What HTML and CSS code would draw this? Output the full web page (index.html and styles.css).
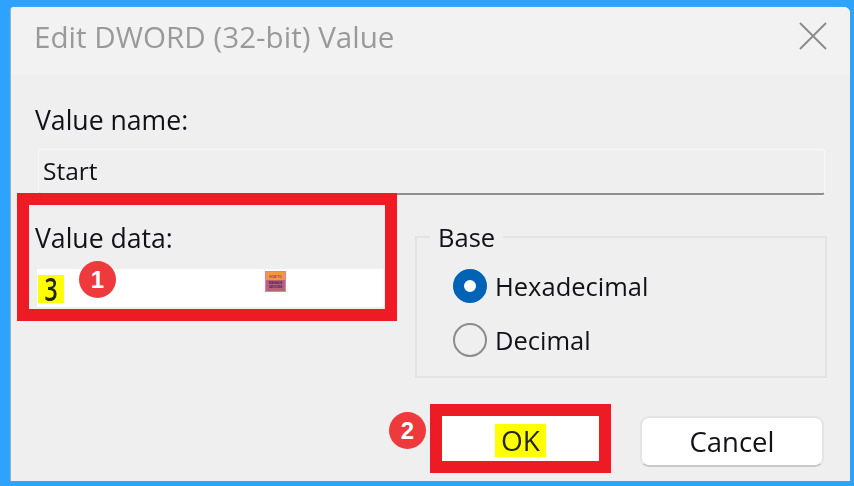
FILE: index.html
```html
<!DOCTYPE html>
<html lang="en">
<head>
<meta charset="utf-8">
<title>Edit DWORD (32-bit) Value</title>
<link rel="stylesheet" href="styles.css">
</head>
<body>
<div class="window">
  <header class="titlebar">
    <span class="title">Edit DWORD (32-bit) Value</span>
    <svg class="close" viewBox="0 0 28 28" aria-label="Close"><path d="M1 1L27 27M27 1L1 27"/></svg>
  </header>
  <main class="content">
    <div class="label name-label">Value name:</div>
    <div class="name-field">Start</div>
    <div class="middle">
      <div class="data-col">
        <div class="label">Value data:</div>
        <div class="data-field">
          <span class="hl hl-three"><span class="three-glyph">3</span></span>
          <div class="logo"><span class="logo-top">HOW TO</span><span class="logo-bottom">MANAGE DEVICES</span></div>
        </div>
        <div class="redbox"></div>
        <span class="badge badge-one">1</span>
      </div>
      <fieldset class="base">
        <legend>Base</legend>
        <div class="radio-row"><span class="radio on"></span><span>Hexadecimal</span></div>
        <div class="radio-row"><span class="radio"></span><span>Decimal</span></div>
      </fieldset>
    </div>
    <div class="actions">
      <span class="badge badge-two">2</span>
      <div class="btn ok"><span class="hl hl-ok">OK</span></div>
      <div class="btn cancel">Cancel</div>
    </div>
  </main>
</div>
</body>
</html>
```
FILE: styles.css
```css
* { box-sizing: border-box; }
html, body { margin: 0; height: 100%; }
body {
  width: 854px;
  height: 486px;
  overflow: hidden;
  background: #2ea3fe;
  padding: 7px 4px 5px 11px;
  font-family: "Open Sans", "Noto Sans", sans-serif;
  color: #111118;
}
.window {
  height: 474px;
  background: #efefef;
  border-radius: 3px 6px 0 0;
  box-shadow: -1px 0 1px #9fb4c4;
  display: flex;
  flex-direction: column;
}
.titlebar {
  height: 68px;
  flex: none;
  background: #f2f2f2;
  border-radius: 3px 6px 0 0;
  padding: 15px 23px 0 23px;
  display: flex;
  justify-content: space-between;
  align-items: flex-start;
}
.title {
  font-size: 29.6px;
  line-height: 30px;
  color: #9a9a9a;
  filter: blur(0.4px);
}
.close { width: 28px; height: 28px; }
.close path { stroke: #8a8a8a; stroke-width: 1.8; fill: none; }
.content {
  flex: 1;
  position: relative;
  padding: 29px 22px 0 24px;
}
.label {
  font-size: 26.6px;
  line-height: 32px;
  filter: blur(0.3px);
}
.name-field {
  margin: 13px 3px 0 3px;
  height: 46px;
  padding: 3px 0 0 4px;
  font-size: 24.5px;
  line-height: 36px;
  background: #efefef;
  border: 1px solid #f8f8f8;
  border-bottom: 2px solid #8e8e8e;
  border-radius: 3px;
  filter: blur(0.3px);
}
.middle {
  display: flex;
  margin-top: 12px;
  height: 171px;
}
.data-col {
  position: relative;
  flex: none;
  width: 379px;
  padding-top: 15px;
}
.data-field {
  position: relative;
  margin: 15px 0 0 2px;
  width: 347px;
  height: 38px;
  background: #fff;
  padding: 6px 0 0 1px;
}
.hl { background: #ffff00; color: #24241a; filter: blur(0.3px); }
.hl-three {
  display: block;
  width: 26px;
  height: 28px;
  font-size: 32px;
  font-weight: 600;
  line-height: 28px;
  text-align: center;
}
.three-glyph {
  display: inline-block;
  transform: scaleX(0.72);
}
.logo {
  position: absolute;
  left: 228px;
  top: 2px;
  width: 21px;
  height: 21px;
  background: #ec9a3c;
  border: 1px solid #dc7cc4;
  display: flex;
  flex-direction: column;
  align-items: center;
  font-family: "Liberation Sans", sans-serif;
  font-size: 3px;
  line-height: 4px;
  overflow: hidden;
}
.logo-top { color: #c5188f; font-weight: bold; height: 8px; padding-top: 3px; }
.logo-bottom {
  width: 100%;
  height: 11px;
  padding-top: 1px;
  text-align: center;
  font-weight: bold;
  color: #3a1a6a;
  background: #b56478;
}
.redbox {
  position: absolute;
  left: -18px;
  top: -14px;
  width: 380px;
  height: 128px;
  border: 12px solid #ed1c24;
}
.badge {
  position: absolute;
  width: 37px;
  height: 37px;
  border-radius: 50%;
  background: #ee3a3c;
  color: #fff;
  font-family: "Liberation Sans", sans-serif;
  font-weight: bold;
  font-size: 24px;
  line-height: 37px;
  text-align: center;
}
.badge-one { left: 44px; top: 54px; }
.base {
  flex: none;
  width: 412px;
  height: 157px;
  margin: 14px 0 0 1px;
  padding: 0 0 0 36px;
  border: 2px solid #e3e3e3;
  min-inline-size: 0;
  font-size: 25.5px;
}
.base legend {
  margin-left: -23px;
  padding: 0 8px;
  line-height: 32px;
  filter: blur(0.3px);
}
.radio-row {
  display: flex;
  align-items: center;
  gap: 8px;
  height: 36px;
  margin-top: 18px;
  filter: blur(0.3px);
}
.radio-row:first-of-type { margin-top: 15px; }
.radio {
  width: 34px;
  height: 34px;
  border-radius: 50%;
  background: #efefef;
  border: 2px solid #8b8b8b;
  flex: none;
}
.radio.on {
  background: #fff;
  border: 11px solid #0063b5;
}
.actions {
  display: flex;
  align-items: center;
  margin: 26px 0 0 395px;
  height: 69px;
  gap: 29px;
}
.btn {
  flex: none;
  display: flex;
  align-items: center;
  justify-content: center;
  background: #fff;
}
.ok {
  width: 181px;
  height: 69px;
  border: 12px solid #ed1c24;
}
.hl-ok { padding: 0 6px; height: 33px; line-height: 33px; font-size: 28px; margin-top: 3px; }
.cancel {
  width: 184px;
  height: 51px;
  margin-top: 6px;
  font-size: 27.5px;
  border: 2px solid #e4e4e4;
  border-bottom-color: #c8c8c8;
  border-radius: 9px;
  filter: blur(0.3px);
}
.badge-two { left: 378px; top: 337px; }
```
